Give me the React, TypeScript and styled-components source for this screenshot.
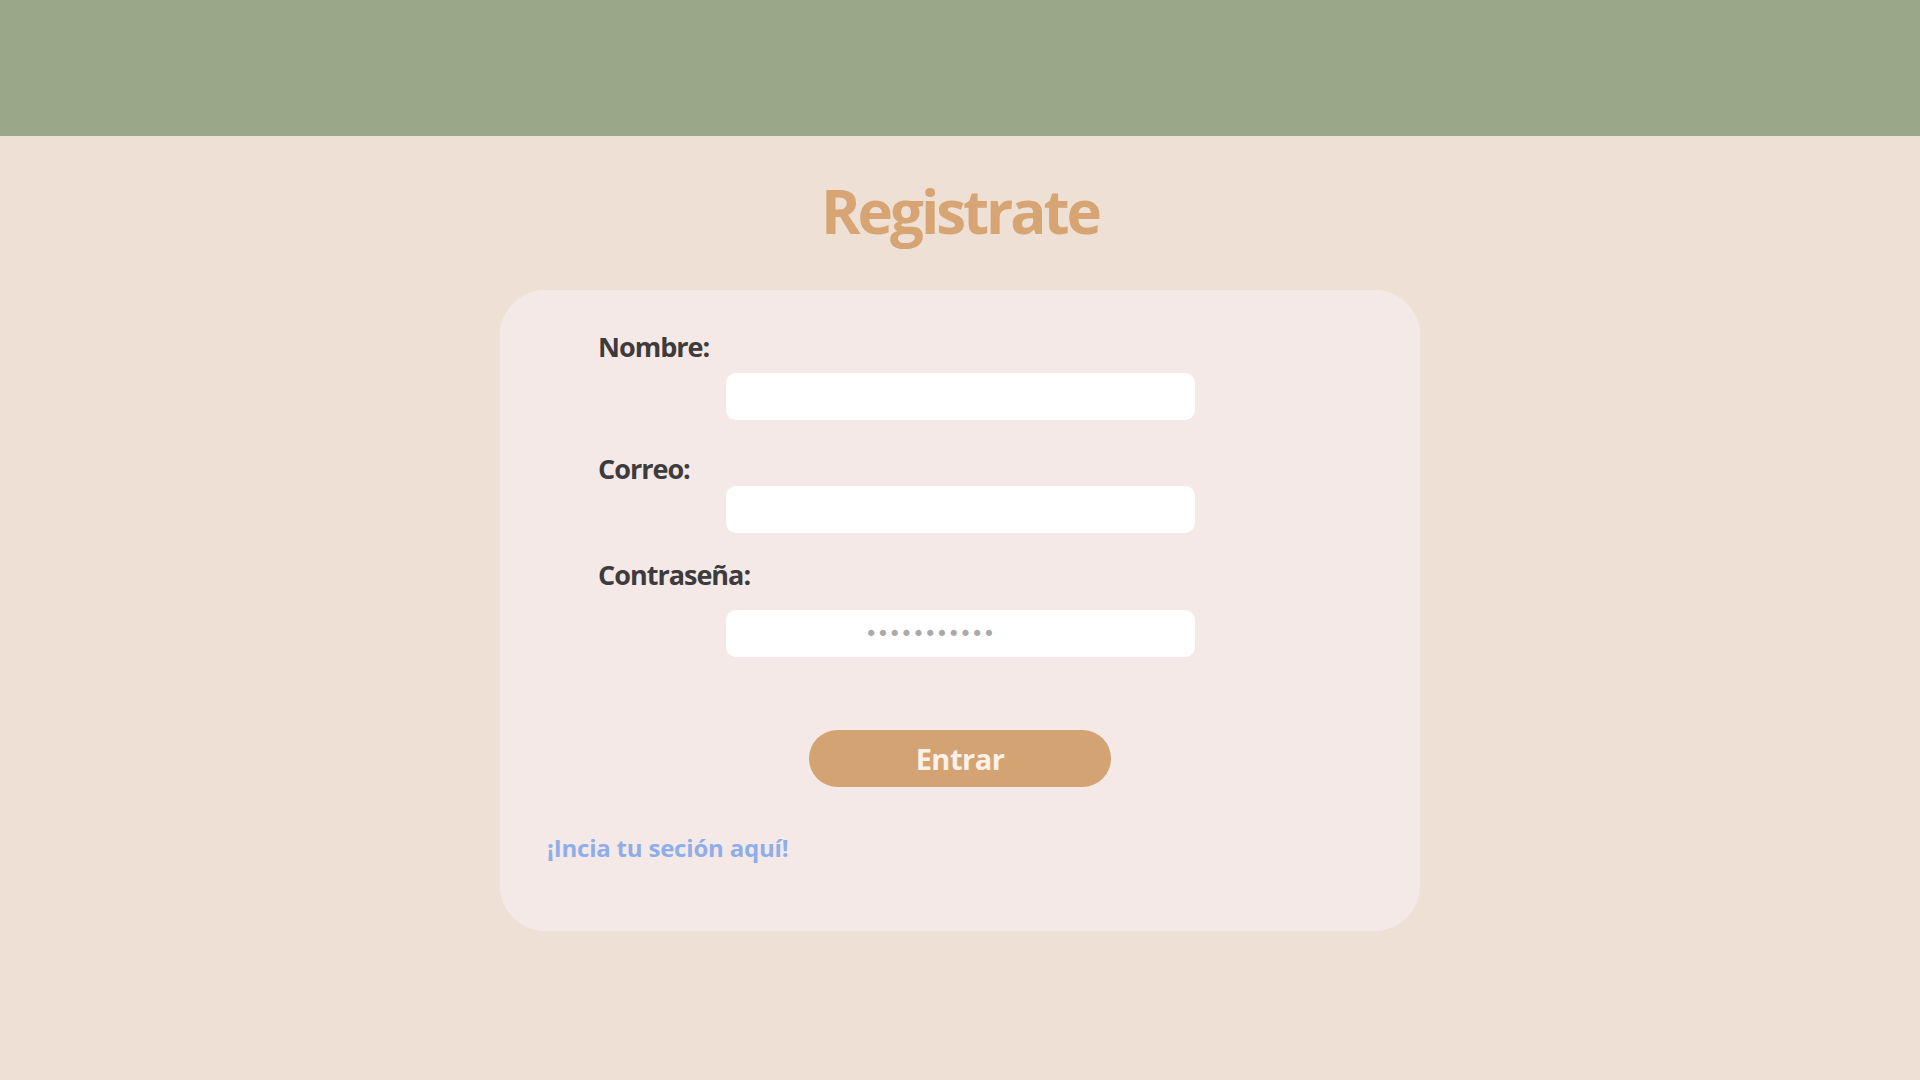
import React from "react";
import styled, { createGlobalStyle } from "styled-components";

const GlobalStyle = createGlobalStyle`
  body {
    margin: 0;
    background: #eee0d4;
    font-family: "Open Sans", "Noto Sans", Arial, sans-serif;
  }
`;

const Page = styled.div`
  min-height: 1080px;
  display: flex;
  flex-direction: column;
  align-items: center;
`;

const TopBar = styled.header`
  align-self: stretch;
  height: 136px;
  background: #9aa88a;
`;

const Title = styled.h1`
  margin: 45px 0 0;
  font-size: 60px;
  line-height: 1;
  font-weight: 700;
  letter-spacing: -3px;
  color: #d6a573;
`;

const Card = styled.form`
  margin-top: 49px;
  width: 920px;
  box-sizing: border-box;
  padding: 43px 0 71px;
  background: #f5e9e8;
  border-radius: 45px;
  display: flex;
  flex-direction: column;
`;

const Label = styled.label<{ $top: number; $gap: number }>`
  display: block;
  margin: ${(p) => p.$top}px 0 ${(p) => p.$gap}px 98px;
  font-size: 27px;
  line-height: 1;
  font-weight: 700;
  letter-spacing: -1px;
  color: #3d3b3b;
`;

const Field = styled.input`
  margin-left: 226px;
  width: 469px;
  height: 47px;
  box-sizing: border-box;
  border: none;
  border-radius: 10px;
  background: #ffffff;
  outline: none;
  padding: 0 14px;
  font-size: 18px;

  &[type="password"] {
    padding-left: 139px;
    font-family: "DejaVu Sans", sans-serif;
    font-size: 21px;
    letter-spacing: -0.6px;
  }

  &::placeholder {
    color: #a9a9a9;
  }
`;

const SubmitButton = styled.button`
  align-self: center;
  margin-top: 73px;
  width: 302px;
  height: 57px;
  border: none;
  border-radius: 29px;
  background: #d4a373;
  color: #fbf1e8;
  font-family: inherit;
  font-size: 29px;
  font-weight: 700;
  letter-spacing: -0.5px;
  line-height: 1;
  cursor: pointer;
`;

const LoginLink = styled.a`
  margin: 49px 0 0 47px;
  font-size: 24px;
  line-height: 1;
  font-weight: 700;
  letter-spacing: -0.2px;
  color: #8eaeea;
  text-decoration: none;
`;

const App = (): JSX.Element => {
  return (
    <Page>
      <GlobalStyle />
      <TopBar />
      <Title>Registrate</Title>
      <Card onSubmit={(e) => e.preventDefault()}>
        <Label $top={0} $gap={13} htmlFor="nombre">
          Nombre:
        </Label>
        <Field id="nombre" type="text" />
        <Label $top={35} $gap={4} htmlFor="correo">
          Correo:
        </Label>
        <Field id="correo" type="email" />
        <Label $top={28} $gap={22} htmlFor="clave">
          Contraseña:
        </Label>
        <Field id="clave" type="password" placeholder="•••••••••••" />
        <SubmitButton type="submit">Entrar</SubmitButton>
        <LoginLink href="#">¡Incia tu seción aquí!</LoginLink>
      </Card>
    </Page>
  );
};

export default App;
